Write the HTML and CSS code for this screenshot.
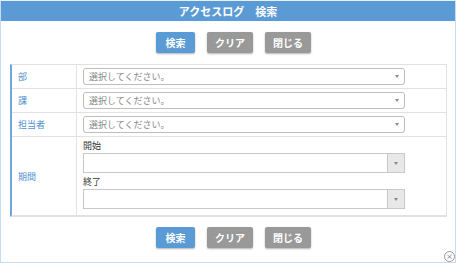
FILE: index.html
```html
<!DOCTYPE html>
<html lang="ja">

<head>
    <meta charset="UTF-8">
    <title>アクセスログ 検索</title>
    <link rel="stylesheet" href="styles.css">
</head>

<body>
    <div class="dialog">
        <div class="title">アクセスログ　検索</div>

        <div class="actions">
            <button class="btn btn-blue">検索</button>
            <button class="btn btn-gray">クリア</button>
            <button class="btn btn-gray">閉じる</button>
        </div>

        <div class="form">
            <div class="row">
                <div class="label">部</div>
                <div class="field">
                    <div class="select">選択してください。<span class="caret"></span></div>
                </div>
            </div>
            <div class="row">
                <div class="label">課</div>
                <div class="field">
                    <div class="select">選択してください。<span class="caret"></span></div>
                </div>
            </div>
            <div class="row">
                <div class="label">担当者</div>
                <div class="field">
                    <div class="select">選択してください。<span class="caret"></span></div>
                </div>
            </div>
            <div class="row row-period">
                <div class="label">期間</div>
                <div class="field">
                    <div class="sub-label">開始</div>
                    <div class="date">
                        <span class="date-btn"><span class="caret"></span></span>
                    </div>
                    <div class="sub-label">終了</div>
                    <div class="date">
                        <span class="date-btn"><span class="caret"></span></span>
                    </div>
                </div>
            </div>
        </div>

        <div class="actions actions-bottom">
            <button class="btn btn-blue">検索</button>
            <button class="btn btn-gray">クリア</button>
            <button class="btn btn-gray">閉じる</button>
        </div>

        <span class="close">×</span>
    </div>
</body>

</html>
```

FILE: styles.css
```css
body {
    margin: 0;
    padding: 0;
    font-family: "Noto Sans CJK JP", "Noto Sans", sans-serif;
    background-color: #fff;
}

.dialog {
    position: relative;
    width: 456px;
    height: 263px;
    box-sizing: border-box;
    border: 1px solid #c6dcf3;
    border-top-color: #e8f0fa;
    overflow: hidden;
}

.title {
    height: 20px;
    line-height: 20px;
    background-color: #5b9bd5;
    color: #fff;
    font-size: 11px;
    font-weight: bold;
    text-align: center;
}

.actions {
    display: flex;
    justify-content: center;
    gap: 12px;
    margin-top: 11px;
    padding-left: 11px;
}

.actions-bottom {
    margin-top: 10px;
}

.btn {
    height: 21px;
    padding: 0;
    border: none;
    border-radius: 2px;
    color: #fff;
    font-family: inherit;
    font-size: 10px;
    font-weight: bold;
    box-shadow: 0 1px 2px rgba(0, 0, 0, 0.3);
}

.btn-blue {
    width: 39px;
    background-color: #5b9bd5;
}

.btn-gray {
    width: 46px;
    background-color: #999;
}

.form {
    margin: 11px 8px 0 9px;
    border-top: 1px solid #e2e2e2;
    border-right: 1px solid #e2e2e2;
    border-bottom: 2px solid #e2e2e2;
    border-left: 2px solid #6fa6dc;
}

.row {
    display: flex;
    border-bottom: 1px solid #e2e2e2;
}

.row:last-child {
    border-bottom: none;
}

.label {
    width: 58px;
    padding-left: 6px;
    border-right: 1px solid #e2e2e2;
    display: flex;
    align-items: center;
    color: #4f8fcf;
    font-size: 9px;
}

.field {
    flex: 1;
    padding: 3px 0 3px 6px;
}

.select {
    position: relative;
    width: 322px;
    height: 17px;
    box-sizing: border-box;
    border: 1px solid #bdbdbd;
    border-radius: 3px;
    padding-left: 5px;
    line-height: 15px;
    color: #888;
    font-size: 9px;
}

.select .caret {
    position: absolute;
    right: 5px;
    top: 6px;
}

.caret {
    display: inline-block;
    width: 0;
    height: 0;
    border-left: 2.5px solid transparent;
    border-right: 2.5px solid transparent;
    border-top: 3px solid #888;
}

.row-period .field {
    padding: 3px 0 6px 6px;
}

.sub-label {
    color: #333;
    font-size: 9px;
    line-height: 12px;
}

.sub-label + .date {
    margin-top: 1px;
}

.date + .sub-label {
    margin-top: 3px;
}

.date {
    display: flex;
    justify-content: flex-end;
    width: 322px;
    height: 20px;
    box-sizing: border-box;
    border: 1px solid #c8c8c8;
}

.date-btn {
    width: 16px;
    display: flex;
    align-items: center;
    justify-content: center;
    background-color: #e8e8e8;
    border-left: 1px solid #c8c8c8;
}

.close {
    position: absolute;
    right: 0;
    bottom: 0;
    width: 9px;
    height: 9px;
    border: 1px solid #999;
    border-radius: 50%;
    background-color: #fff;
    color: #555;
    font-size: 7px;
    line-height: 9px;
    text-align: center;
}
```
